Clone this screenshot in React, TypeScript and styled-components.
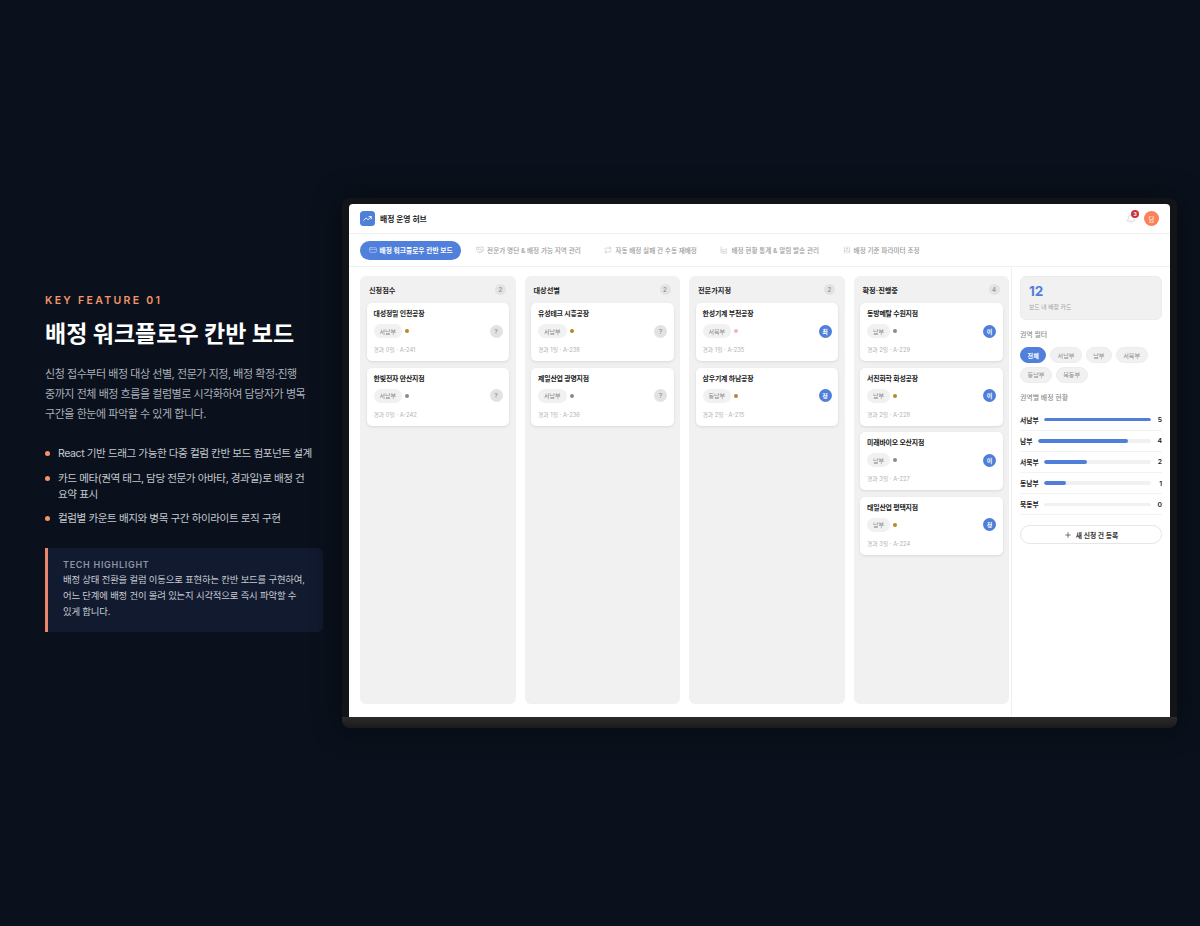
import React from 'react';
import styled, { createGlobalStyle } from 'styled-components';
import { Bell, ChartArea, CreditCard, Handshake, Plus, Repeat, SlidersVertical, TrendingUp } from 'lucide-react';

const GlobalStyle = createGlobalStyle`
  html, body {
    margin: 0;
    padding: 0;
    background: #0a111c;
  }
  * {
    box-sizing: border-box;
  }
  body {
    font-family: Inter, "Noto Sans CJK KR", sans-serif;
  }
`;

const Page = styled.div`
  width: 1200px;
  height: 926px;
  display: flex;
  align-items: center;
  padding-left: 45px;
  gap: 19px;
  background: #0a111c;
  overflow: hidden;
`;

const Intro = styled.section`
  width: 278px;
  flex-shrink: 0;
`;

const Eyebrow = styled.div`
  font-size: 10.5px;
  line-height: 14px;
  font-weight: 600;
  letter-spacing: 2.3px;
  color: #f4956a;
`;

const Headline = styled.h1`
  margin: 10px 0 0;
  font-size: 23px;
  line-height: 32px;
  font-weight: 700;
  color: #ffffff;
`;

const Lead = styled.p`
  margin: 14px 0 0;
  font-size: 11px;
  line-height: 20px;
  letter-spacing: -0.45px;
  color: #aab0ba;
`;

const Bullets = styled.ul`
  list-style: none;
  margin: 22px 0 0;
  padding: 0;
  display: flex;
  flex-direction: column;
  gap: 8.5px;
`;

const BulletItem = styled.li`
  position: relative;
  padding-left: 13px;
  font-size: 10.6px;
  line-height: 16px;
  letter-spacing: -0.44px;
  color: #c3c8d0;
  &::before {
    content: '';
    position: absolute;
    left: 0;
    top: 5px;
    width: 5px;
    height: 5px;
    border-radius: 50%;
    background: #f4956a;
  }
`;

const TechBox = styled.aside`
  margin-top: 21px;
  padding: 10px 14px 12px 15px;
  background: #111a2e;
  border-left: 3px solid #e8876a;
  border-radius: 0 6px 6px 0;
`;

const TechLabel = styled.div`
  font-size: 9px;
  line-height: 13px;
  font-weight: 600;
  letter-spacing: 0.7px;
  color: #8d94a3;
`;

const TechText = styled.p`
  margin: 1px 0 0;
  font-size: 9.4px;
  line-height: 16px;
  letter-spacing: -0.18px;
  color: #c8ccd4;
`;

const Bezel = styled.div`
  width: 835px;
  flex-shrink: 0;
  padding: 6px 7px 11px;
  background: linear-gradient(#131417 0, #131417 calc(100% - 11px), #2b2b2b calc(100% - 11px), #1a1a1c 100%);
  border-radius: 8px;
  box-shadow: 0 0 30px rgba(0, 0, 0, 0.45);
`;

const Screen = styled.div`
  height: 513px;
  background: #ffffff;
  border-radius: 4px 4px 0 0;
  display: flex;
  flex-direction: column;
  overflow: hidden;
`;

const TopBar = styled.header`
  height: 30px;
  flex-shrink: 0;
  padding: 0 11px;
  display: flex;
  align-items: center;
  justify-content: space-between;
  border-bottom: 1px solid #f0f0f0;
`;

const Brand = styled.div`
  display: flex;
  align-items: center;
  gap: 5px;
  font-size: 7.8px;
  font-weight: 700;
  color: #1a1a1a;
`;

const LogoMark = styled.div`
  width: 15px;
  height: 15px;
  border-radius: 3.5px;
  background: #4f7fd9;
  color: #ffffff;
  display: flex;
  align-items: center;
  justify-content: center;
`;

const TopActions = styled.div`
  display: flex;
  align-items: center;
  gap: 8px;
`;

const BellWrap = styled.div`
  position: relative;
  width: 10px;
  height: 10px;
  color: #cfd1d5;
  display: flex;
`;

const BellBadge = styled.span`
  position: absolute;
  top: -4px;
  right: -3px;
  width: 8px;
  height: 8px;
  border-radius: 50%;
  background: #c9343c;
  color: #ffffff;
  font-size: 5px;
  font-weight: 700;
  line-height: 8px;
  text-align: center;
`;

const Avatar = styled.div`
  width: 15px;
  height: 15px;
  border-radius: 50%;
  background: #fb8158;
  color: #ffe9e0;
  font-size: 6.5px;
  font-weight: 500;
  display: flex;
  align-items: center;
  justify-content: center;
`;

const Tabs = styled.nav`
  height: 33px;
  flex-shrink: 0;
  padding: 0 11px;
  display: flex;
  align-items: center;
  gap: 15px;
  border-bottom: 1px solid #f0f0f0;
`;

const Tab = styled.div<{ $active?: boolean }>`
  height: 19px;
  padding: 0 ${({ $active }) => ($active ? '8.5px' : '0')};
  margin-right: ${({ $active }) => ($active ? '0' : '8.5px')};
  display: flex;
  align-items: center;
  gap: 3px;
  border-radius: 10px;
  background: ${({ $active }) => ($active ? '#5080db' : 'transparent')};
  color: ${({ $active }) => ($active ? '#ffffff' : '#9a9a9a')};
  font-size: ${({ $active }) => ($active ? '6.75px' : '6.6px')};
  font-weight: ${({ $active }) => ($active ? 700 : 500)};
  white-space: nowrap;
`;

const TabIcon = styled.span<{ $active?: boolean }>`
  width: 8px;
  height: 8px;
  display: flex;
  color: ${({ $active }) => ($active ? '#b9cdf2' : '#c4c4c4')};
`;

const Body = styled.div`
  flex: 1;
  min-height: 0;
  display: flex;
`;

const Board = styled.main`
  flex: 1;
  min-width: 0;
  padding: 9px 2px 13px 11px;
  display: grid;
  grid-template-columns: repeat(4, 155.5px);
  gap: 9px;
`;

const Column = styled.section`
  padding: 0 6.5px;
  background: #f1f1f1;
  border-radius: 6px;
`;

const ColumnHead = styled.div`
  height: 27px;
  padding: 0 3px 0 2.5px;
  display: flex;
  align-items: center;
  justify-content: space-between;
  font-size: 7.2px;
  font-weight: 700;
  color: #1f1f1f;
`;

const CountBadge = styled.span`
  width: 11px;
  height: 11px;
  border-radius: 50%;
  background: #e3e3e3;
  color: #8b8b8b;
  font-size: 6.2px;
  font-weight: 500;
  display: flex;
  align-items: center;
  justify-content: center;
`;

const CardStack = styled.div`
  display: flex;
  flex-direction: column;
  gap: 6.5px;
`;

const Card = styled.article`
  height: 58px;
  padding: 6px 6.5px 0 7px;
  background: #ffffff;
  border-radius: 5px;
  box-shadow: 0 1px 3px rgba(0, 0, 0, 0.1);
`;

const CardTitle = styled.div`
  font-size: 6.9px;
  line-height: 10px;
  letter-spacing: -0.15px;
  font-weight: 700;
  color: #1a1a1a;
`;

const CardMeta = styled.div`
  margin-top: 5px;
  display: flex;
  align-items: center;
  gap: 3px;
`;

const RegionTag = styled.span`
  height: 14px;
  padding: 0 6px;
  border-radius: 7px;
  background: #f1f1f1;
  color: #8a8a8a;
  font-size: 6px;
  display: flex;
  align-items: center;
`;

const Dot = styled.span<{ $color: string }>`
  width: 4px;
  height: 4px;
  border-radius: 50%;
  background: ${({ $color }) => $color};
`;

const Assignee = styled.span<{ $assigned: boolean }>`
  margin-left: auto;
  width: 13px;
  height: 13px;
  border-radius: 50%;
  background: ${({ $assigned }) => ($assigned ? '#4f7fd9' : '#e2e2e2')};
  color: ${({ $assigned }) => ($assigned ? '#ffffff' : '#8b8b8b')};
  font-size: 6px;
  font-weight: ${({ $assigned }) => ($assigned ? 700 : 500)};
  display: flex;
  align-items: center;
  justify-content: center;
`;

const CardFoot = styled.div`
  margin-top: 7px;
  font-size: 5.8px;
  line-height: 9px;
  color: #b2b2b2;
`;

const Side = styled.aside`
  width: 159px;
  flex-shrink: 0;
  padding: 9px 8px 0;
  border-left: 1px solid #f0f0f0;
`;

const StatCard = styled.div`
  height: 44px;
  padding: 7px 8px 0;
  background: #f1f1f1;
  border: 1px solid #ececec;
  border-radius: 6px;
`;

const StatValue = styled.div`
  font-size: 13.5px;
  line-height: 15px;
  font-weight: 700;
  color: #4f7fd9;
`;

const StatLabel = styled.div`
  margin-top: 3px;
  font-size: 5.8px;
  line-height: 9px;
  color: #a0a0a0;
`;

const SideLabel = styled.div`
  margin-top: 10px;
  font-size: 6.9px;
  line-height: 10px;
  font-weight: 500;
  color: #8e8e8e;
`;

const Chips = styled.div`
  margin-top: 7px;
  display: flex;
  flex-wrap: wrap;
  gap: 3.5px 3.6px;
`;

const Chip = styled.span<{ $active?: boolean }>`
  height: 16px;
  padding: 0 6.6px;
  border-radius: 8px;
  background: ${({ $active }) => ($active ? '#5080db' : '#f1f1f1')};
  color: ${({ $active }) => ($active ? '#ffffff' : '#8e8e8e')};
  border: 1px solid ${({ $active }) => ($active ? '#5080db' : '#ececec')};
  font-size: 6.1px;
  font-weight: ${({ $active }) => ($active ? 700 : 400)};
  display: flex;
  align-items: center;
`;

const StatRows = styled.div`
  margin-top: 7px;
`;

const StatRow = styled.div`
  height: 21.2px;
  display: flex;
  align-items: center;
  gap: 5.5px;
  border-bottom: 1px solid #f3f3f3;
  font-size: 6.8px;
  font-weight: 600;
  color: #222222;
`;

const Track = styled.div`
  flex: 1;
  height: 3.5px;
  border-radius: 2px;
  background: #f1f1f1;
  overflow: hidden;
`;

const Fill = styled.div`
  height: 100%;
  border-radius: 2px;
  background: #4f7fd9;
`;

const Count = styled.span`
  width: 6px;
  text-align: right;
`;

const AddButton = styled.button`
  width: 100%;
  height: 19px;
  margin-top: 10px;
  border: 1px solid #e6e6e6;
  border-radius: 10px;
  background: #ffffff;
  color: #333333;
  font-family: inherit;
  font-size: 6.8px;
  font-weight: 600;
  display: flex;
  align-items: center;
  justify-content: center;
  gap: 4px;
`;

const AMBER = '#b8862b';
const GRAY = '#8a8a8a';
const PINK = '#efb6c0';

const columns = [
  {
    name: '신청접수',
    cards: [
      { title: '대성정밀 인천공장', region: '서남부', dot: AMBER, who: '?', foot: '경과 0일 · A-241' },
      { title: '한빛전자 안산지점', region: '서남부', dot: GRAY, who: '?', foot: '경과 0일 · A-242' },
    ],
  },
  {
    name: '대상선별',
    cards: [
      { title: '유성테크 시흥공장', region: '서남부', dot: AMBER, who: '?', foot: '경과 1일 · A-238' },
      { title: '제일산업 광명지점', region: '서남부', dot: GRAY, who: '?', foot: '경과 1일 · A-236' },
    ],
  },
  {
    name: '전문가지정',
    cards: [
      { title: '한성기계 부천공장', region: '서북부', dot: PINK, who: '최', foot: '경과 1일 · A-235' },
      { title: '삼우기계 하남공장', region: '동남부', dot: AMBER, who: '정', foot: '경과 2일 · A-215' },
    ],
  },
  {
    name: '확정·진행중',
    cards: [
      { title: '동방메탈 수원지점', region: '남부', dot: GRAY, who: '이', foot: '경과 2일 · A-229' },
      { title: '서진화학 화성공장', region: '남부', dot: AMBER, who: '이', foot: '경과 2일 · A-228' },
      { title: '미래바이오 오산지점', region: '남부', dot: GRAY, who: '이', foot: '경과 3일 · A-227' },
      { title: '태일산업 평택지점', region: '남부', dot: AMBER, who: '정', foot: '경과 3일 · A-224' },
    ],
  },
];

const regionStats = [
  { name: '서남부', value: 5 },
  { name: '남부', value: 4 },
  { name: '서북부', value: 2 },
  { name: '동남부', value: 1 },
  { name: '북동부', value: 0 },
];

const App: React.FC = () => (
  <>
    <GlobalStyle />
    <Page>
      <Intro>
        <Eyebrow>KEY FEATURE 01</Eyebrow>
        <Headline>배정 워크플로우 칸반 보드</Headline>
        <Lead>
          신청 접수부터 배정 대상 선별, 전문가 지정, 배정 확정·진행
          <br />
          중까지 전체 배정 흐름을 컬럼별로 시각화하여 담당자가 병목
          <br />
          구간을 한눈에 파악할 수 있게 합니다.
        </Lead>
        <Bullets>
          <BulletItem>React 기반 드래그 가능한 다중 컬럼 칸반 보드 컴포넌트 설계</BulletItem>
          <BulletItem>
            카드 메타(권역 태그, 담당 전문가 아바타, 경과일)로 배정 건
            <br />
            요약 표시
          </BulletItem>
          <BulletItem>컬럼별 카운트 배지와 병목 구간 하이라이트 로직 구현</BulletItem>
        </Bullets>
        <TechBox>
          <TechLabel>TECH HIGHLIGHT</TechLabel>
          <TechText>
            배정 상태 전환을 컬럼 이동으로 표현하는 칸반 보드를 구현하여,
            <br />
            어느 단계에 배정 건이 몰려 있는지 시각적으로 즉시 파악할 수
            <br />
            있게 합니다.
          </TechText>
        </TechBox>
      </Intro>
      <Bezel>
        <Screen>
          <TopBar>
            <Brand>
              <LogoMark>
                <TrendingUp size={9} strokeWidth={2.4} />
              </LogoMark>
              배정 운영 허브
            </Brand>
            <TopActions>
              <BellWrap>
                <Bell size={10} strokeWidth={2} />
                <BellBadge>3</BellBadge>
              </BellWrap>
              <Avatar>담</Avatar>
            </TopActions>
          </TopBar>
          <Tabs>
            <Tab $active>
              <TabIcon $active>
                <CreditCard size={8} />
              </TabIcon>
              배정 워크플로우 칸반 보드
            </Tab>
            <Tab>
              <TabIcon>
                <Handshake size={8} />
              </TabIcon>
              전문가 명단 &amp; 배정 가능 지역 관리
            </Tab>
            <Tab>
              <TabIcon>
                <Repeat size={8} />
              </TabIcon>
              자동 배정 실패 건 수동 재배정
            </Tab>
            <Tab>
              <TabIcon>
                <ChartArea size={8} />
              </TabIcon>
              배정 현황 통계 &amp; 알림 발송 관리
            </Tab>
            <Tab>
              <TabIcon>
                <SlidersVertical size={8} />
              </TabIcon>
              배정 기준 파라미터 조정
            </Tab>
          </Tabs>
          <Body>
            <Board>
              {columns.map(col => (
                <Column key={col.name}>
                  <ColumnHead>
                    {col.name}
                    <CountBadge>{col.cards.length}</CountBadge>
                  </ColumnHead>
                  <CardStack>
                    {col.cards.map(card => (
                      <Card key={card.title}>
                        <CardTitle>{card.title}</CardTitle>
                        <CardMeta>
                          <RegionTag>{card.region}</RegionTag>
                          <Dot $color={card.dot} />
                          <Assignee $assigned={card.who !== '?'}>{card.who}</Assignee>
                        </CardMeta>
                        <CardFoot>{card.foot}</CardFoot>
                      </Card>
                    ))}
                  </CardStack>
                </Column>
              ))}
            </Board>
            <Side>
              <StatCard>
                <StatValue>12</StatValue>
                <StatLabel>보드 내 배정 카드</StatLabel>
              </StatCard>
              <SideLabel>권역 필터</SideLabel>
              <Chips>
                <Chip $active>전체</Chip>
                <Chip>서남부</Chip>
                <Chip>남부</Chip>
                <Chip>서북부</Chip>
                <Chip>동남부</Chip>
                <Chip>북동부</Chip>
              </Chips>
              <SideLabel>권역별 배정 현황</SideLabel>
              <StatRows>
                {regionStats.map(row => (
                  <StatRow key={row.name}>
                    {row.name}
                    <Track>
                      <Fill style={{ width: `${row.value * 20}%` }} />
                    </Track>
                    <Count>{row.value}</Count>
                  </StatRow>
                ))}
              </StatRows>
              <AddButton>
                <Plus size={8} />
                새 신청 건 등록
              </AddButton>
            </Side>
          </Body>
        </Screen>
      </Bezel>
    </Page>
  </>
);

export default App;
